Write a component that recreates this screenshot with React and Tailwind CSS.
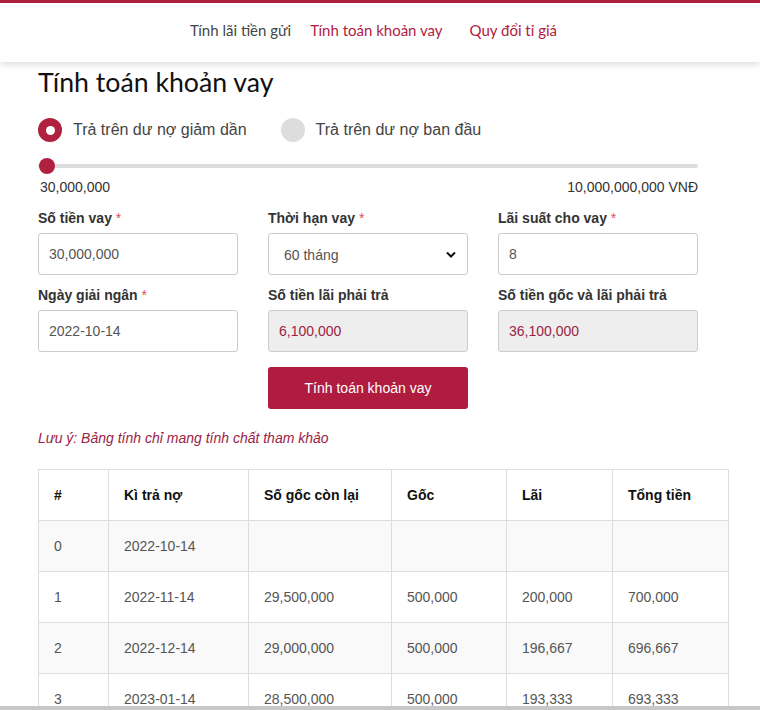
import React from 'react';

const rows = [
    ['0', '2022-10-14', '', '', '', ''],
    ['1', '2022-11-14', '29,500,000', '500,000', '200,000', '700,000'],
    ['2', '2022-12-14', '29,000,000', '500,000', '196,667', '696,667'],
    ['3', '2023-01-14', '28,500,000', '500,000', '193,333', '693,333'],
];

const cols = ['w-[70px]', 'w-[140px]', 'w-[143px]', 'w-[115px]', 'w-[106px]', 'w-[116px]'];

function Field({ label, required, children }) {
    return (
        <div className="flex flex-col">
            <label className="text-[14px] font-bold text-[#333] leading-[16px] mb-[7px] mt-[1px]">
                {label} {required && <span className="text-[#d9534f] font-normal">*</span>}
            </label>
            {children}
        </div>
    );
}

function Input({ value, disabled }) {
    return (
        <div
            className={
                'h-[42px] border border-[#ccc] rounded-[3px] px-[10px] flex items-center text-[14px] ' +
                (disabled ? 'bg-[#eee] text-[#9b2444]' : 'bg-white text-[#555]')
            }
        >
            {value}
        </div>
    );
}

export default function App() {
    return (
        <div className="h-[710px] overflow-hidden flex flex-col bg-white [font-family:'Liberation_Sans',Arial,sans-serif]">
            {/* Header */}
            <header className="h-[3px] bg-[#b0213f]" />
            <nav className="h-[59px] bg-white shadow-[0_3px_6px_rgba(0,0,0,0.12)] flex justify-center items-center relative z-10 [font-family:Lato,sans-serif] text-[15px] pb-[5px] pr-[13px]">
                <a className="text-[#444] mr-[19px]">Tính lãi tiền gửi</a>
                <a className="text-[#b0213f] mr-[27px]">Tính toán khoản vay</a>
                <a className="text-[#b0213f]">Quy đổi tỉ giá</a>
            </nav>

            {/* Content */}
            <div className="flex-1 overflow-hidden pl-[38px] pr-[32px]">
                <h1 className="[font-family:Lato,sans-serif] text-[26.7px] text-[#111] leading-[32px] mt-[4px]">Tính toán khoản vay</h1>

                <div className="flex items-center mt-[20px] text-[16px] text-[#444]">
                    <span className="w-[24px] h-[24px] rounded-full bg-[#b0213f] flex items-center justify-center">
                        <span className="w-[9px] h-[9px] rounded-full bg-white" />
                    </span>
                    <span className="ml-[11px]">Trả trên dư nợ giảm dần</span>
                    <span className="w-[24px] h-[24px] rounded-full bg-[#ddd] ml-[34px]" />
                    <span className="ml-[11px]">Trả trên dư nợ ban đầu</span>
                </div>

                {/* Slider */}
                <div className="w-[660px] mt-[22px]">
                    <div className="relative h-[4px] bg-[#ddd] rounded-full">
                        <span className="absolute left-[1px] top-[-6px] w-[16px] h-[16px] rounded-full bg-[#b0213f]" />
                    </div>
                    <div className="flex justify-between text-[14px] text-[#333] mt-[11px] leading-[16px]">
                        <span className="ml-[2px]">30,000,000</span>
                        <span>10,000,000,000 VNĐ</span>
                    </div>
                </div>

                {/* Form */}
                <div className="grid grid-cols-[200px_200px_200px] gap-x-[30px] gap-y-[11px] mt-[14px]">
                    <Field label="Số tiền vay" required>
                        <Input value="30,000,000" />
                    </Field>
                    <Field label="Thời hạn vay" required>
                        <div className="h-[42px] border border-[#ccc] rounded-[3px] px-[15px] flex items-center justify-between text-[14px] text-[#555] bg-white">
                            <span className="mt-[2px]">60 tháng</span>
                            <svg width="10" height="7" viewBox="0 0 10 7" className="mr-[-4px]">
                                <path d="M1 1.5 L5 5.5 L9 1.5" stroke="#111" strokeWidth="2" fill="none" />
                            </svg>
                        </div>
                    </Field>
                    <Field label="Lãi suất cho vay" required>
                        <Input value="8" />
                    </Field>
                    <Field label="Ngày giải ngân" required>
                        <Input value="2022-10-14" />
                    </Field>
                    <Field label="Số tiền lãi phải trả">
                        <Input value="6,100,000" disabled />
                    </Field>
                    <Field label="Số tiền gốc và lãi phải trả">
                        <Input value="36,100,000" disabled />
                    </Field>
                </div>

                <div className="flex mt-[15px]">
                    <button className="ml-[230px] w-[200px] h-[42px] rounded-[3px] bg-[#b01c40] text-white text-[14px]">
                        Tính toán khoản vay
                    </button>
                </div>

                <p className="italic text-[14px] text-[#9b2444] mt-[21px] leading-[16px]">
                    Lưu ý: Bảng tính chỉ mang tính chất tham khảo
                </p>

                {/* Table */}
                <table className="mt-[23px] border-collapse text-[14px] table-fixed w-[690px]">
                    <thead>
                        <tr className="h-[51px] bg-white">
                            {['#', 'Kì trả nợ', 'Số gốc còn lại', 'Gốc', 'Lãi', 'Tổng tiền'].map((h, i) => (
                                <th key={i} className={cols[i] + ' border border-[#ddd] text-left font-bold text-[#111] px-[15px]'}>
                                    {h}
                                </th>
                            ))}
                        </tr>
                    </thead>
                    <tbody>
                        {rows.map((r, ri) => (
                            <tr key={ri} className={'h-[51px] ' + (ri % 2 === 0 ? 'bg-[#f9f9f9]' : 'bg-white')}>
                                {r.map((c, ci) => (
                                    <td key={ci} className="border border-[#ddd] px-[15px] text-[#555] pt-[1px]">
                                        {c}
                                    </td>
                                ))}
                            </tr>
                        ))}
                    </tbody>
                </table>
            </div>

            {/* bottom edge */}
            <div className="h-[4px] bg-[#c8c8c8]" />
        </div>
    );
}
